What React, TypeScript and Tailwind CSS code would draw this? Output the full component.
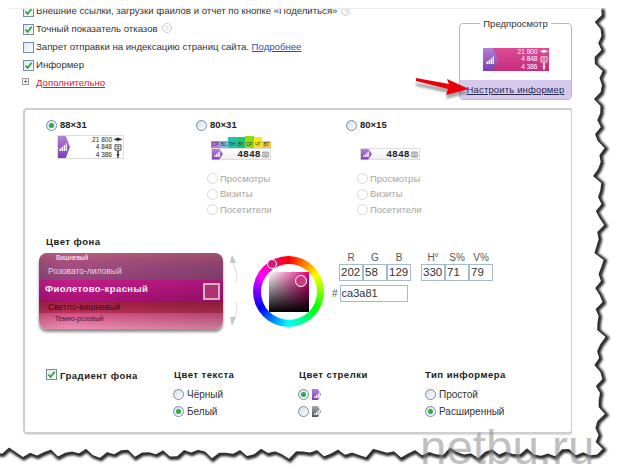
const font = "font-['Liberation_Sans',Arial,sans-serif]";

// torn paper edge: right side then bottom side, jagged but deterministic
const jag = (i: number) => Math.sin(i * 2.3) * 3.2 + Math.sin(i * 5.1 + 1) * 2.4 + Math.sin(i * 0.7) * 1.2;
const tornPoints = (() => {
  const pts: string[] = [];
  for (let y = 8, i = 0; y < 452; y += 7, i++) pts.push(`${599 + jag(i)},${y}`);
  for (let x = 597, i = 3; x > -8; x -= 7, i++) pts.push(`${x},${453 + jag(i) * 0.9}`);
  return pts;
})();
const edgeLine = tornPoints.join(" ");
const outside = `${edgeLine} -10,474 620,474 620,8`;

function Check({ on = true }: { on?: boolean }) {
  return (
    <span className="w-[11px] h-[11px] shrink-0 border border-[#6f8fb0] bg-linear-to-br from-[#dfe6ec] to-white flex items-center justify-center">
      {on && (
        <svg width="9" height="9" viewBox="0 0 9 9">
          <path d="M1.5 4.5 L3.6 7 L7.6 1.8" fill="none" stroke="#22a52b" strokeWidth="1.7" />
        </svg>
      )}
    </span>
  );
}

function Radio({ on = false, off = false }: { on?: boolean; off?: boolean }) {
  return (
    <span
      className={
        off
          ? "w-[11px] h-[11px] shrink-0 rounded-full border border-[#d8d8d8] bg-white"
          : "w-[11px] h-[11px] shrink-0 rounded-full border border-[#6f8fa8] bg-linear-to-br from-[#d5dde5] to-white flex items-center justify-center"
      }
    >
      {on && <span className="w-[5px] h-[5px] rounded-full bg-[#2faa45]" />}
    </span>
  );
}

function Option({ label, on, off }: { label: string; on?: boolean; off?: boolean }) {
  return (
    <div className={off ? "flex items-center gap-[2px] h-[15.5px] text-[#a5a5a5]" : "flex items-center gap-[3px] h-[17px] text-[#333]"}>
      <Radio on={on} off={off} />
      <span>{label}</span>
    </div>
  );
}

function Bars({ className }: { className: string }) {
  return (
    <svg viewBox="0 0 10 10" className={className}>
      <rect x="0.5" y="7" width="2" height="3" fill="#fff" />
      <rect x="3.2" y="5" width="2" height="5" fill="#fff" />
      <rect x="5.9" y="2.5" width="2" height="7.5" fill="#fff" />
      <rect x="8.4" y="0.5" width="1.6" height="9.5" fill="#fff" opacity="0.8" />
    </svg>
  );
}

function Stat({ value, kind }: { value: string; kind: "eye" | "box" | "man" }) {
  return (
    <span className="flex items-center justify-end gap-[2px] h-[7.4px]">
      {value}
      <svg width="8" height="7" viewBox="0 0 8 7" className="shrink-0">
        {kind === "eye" && <path d="M0 3.5 L4 1.8 L8 3.5 L4 4.6Z M3 3.5 L4 6" fill="currentColor" stroke="currentColor" strokeWidth="0.4" />}
        {kind === "box" && <path d="M1 .8 H7 V6.2 H1Z M2.5 2.6 H5.5 M2.5 4.4 H5.5" fill="none" stroke="currentColor" strokeWidth="0.8" />}
        {kind === "man" && <path d="M4 0 A1 1 0 1 1 4 2 A1 1 0 1 1 4 0Z M2.8 2.4 H5.2 V4.4 H4.6 V7 H3.4 V4.4 H2.8Z" fill="currentColor" />}
      </svg>
    </span>
  );
}

function Stats({ tone }: { tone: string }) {
  return (
    <div className={`flex-1 flex flex-col pr-[1px] text-[6.5px] leading-[7.4px] ${tone}`}>
      <Stat value="21 800" kind="eye" />
      <Stat value="4 848" kind="box" />
      <Stat value="4 386" kind="man" />
    </div>
  );
}

function Badge({ w, h, grey }: { w: string; h: string; grey?: boolean }) {
  return (
    <span
      className={`${w} ${h} shrink-0 flex items-center pl-[2px] [clip-path:polygon(0_0,65%_0,100%_50%,65%_100%,0_100%)] ${
        grey ? "bg-linear-to-b from-[#aaa] to-[#555]" : "bg-linear-to-b from-[#b67fd6] to-[#7d3fb0]"
      }`}
    >
      <Bars className="w-[6px] h-[6px]" />
    </span>
  );
}

function BigInformer() {
  return (
    <div className="w-[67px] h-[24px] border border-[#ddd] bg-white flex">
      <span className="w-[12px] shrink-0 flex items-center pl-[1px] [clip-path:polygon(0_0,65%_0,100%_50%,65%_100%,0_100%)] bg-linear-to-b from-[#b67fd6] to-[#7d3fb0]">
        <Bars className="w-[8px] h-[8px]" />
      </span>
      <Stats tone="text-[#222]" />
    </div>
  );
}

function PinkInformer() {
  return (
    <div className="w-[66px] h-[23px] bg-linear-to-b from-[#dc4a94] to-[#c62c7c] flex">
      <span className="w-[16px] shrink-0 flex items-center pl-[3px] [clip-path:polygon(0_0,65%_0,100%_50%,65%_100%,0_100%)] bg-linear-to-b from-[#b67fd6] to-[#7d3fb0]">
        <Bars className="w-[8px] h-[8px]" />
      </span>
      <Stats tone="text-white" />
    </div>
  );
}

function SmallInformer() {
  return (
    <div className="w-[60px] h-[12px] border border-[#ddd] bg-linear-to-b from-white to-[#eee] flex items-center justify-between pr-[1px]">
      <Badge w="w-[11px]" h="h-[11px]" />
      <span className="flex items-center gap-[1px] text-[9.5px] leading-none font-bold text-[#222] tracking-[0.6px]">
        4848
        <svg width="7" height="7" viewBox="0 0 8 7">
          <path d="M1 .8 H7 V6.2 H1Z M2.5 2.6 H5.5 M2.5 4.4 H5.5" fill="none" stroke="#666" strokeWidth="0.8" />
        </svg>
      </span>
    </div>
  );
}

const days = [
  { d: "СР", c: "bg-[#c07ad8]", h: "h-[7px]" },
  { d: "ВС", c: "bg-[#86b6e6]", h: "h-[7px]" },
  { d: "ПН", c: "bg-[#1fc0b0]", h: "h-[11px]" },
  { d: "ВТ", c: "bg-[#22c46a]", h: "h-[11px]" },
  { d: "СР", c: "bg-[#8ed81e]", h: "h-[12px]" },
  { d: "ЧТ", c: "bg-[#f2e81a]", h: "h-[11px]" },
  { d: "ВТ", c: "bg-[#f6c444]", h: "h-[7px]" },
];

function DisabledOptions() {
  return (
    <div className="ml-[11px] mt-[11px] text-[9.5px]">
      <Option off label="Просмотры" />
      <Option off label="Визиты" />
      <Option off label="Посетители" />
    </div>
  );
}

function Drum() {
  return (
    <div className="relative w-[184px] -ml-[7px] h-[76px] rounded-[8px] overflow-hidden shadow-[0_3px_3px_rgba(0,0,0,0.45)] flex flex-col text-white">
      <div className="h-[10px] pl-[17px] text-[6.5px] leading-[10px] bg-linear-to-b from-[#b9607f] to-[#a84d7b]">Вишневый</div>
      <div className="h-[17px] pl-[9px] text-[8.5px] leading-[16px] text-[#f1dbe6] bg-linear-to-b from-[#a54f84] to-[#93467c]">Розовато-лиловый</div>
      <div className="h-[22px] pl-[6px] pr-[3px] flex items-center justify-between font-bold text-[9.5px] tracking-[0.4px] bg-linear-to-b from-[#c71c8a] to-[#ab1177]">
        <span className="-mt-[3px]">Фиолетово-красный</span>
        <span className="w-[17px] h-[17px] border-2 border-[#f3cfe0] bg-[#ca3a81]" />
      </div>
      <div className="h-[11px] pl-[9px] text-[8.5px] leading-[11px] text-[#3a0a1c] bg-linear-to-b from-[#a51f45] to-[#b93158]">Светло-вишневый</div>
      <div className="flex-1 pl-[16px] text-[6.8px] leading-[12px] text-[#54152f] bg-linear-to-b from-[#d04d82] to-[#f08fb4]">Темно-розовый</div>
      <div className="absolute inset-0 bg-linear-to-r from-black/10 via-transparent via-15% to-black/15" />
    </div>
  );
}

function ColorWheel() {
  return (
    <div className="relative w-[71px] h-[71px] rounded-full bg-[conic-gradient(#f00,#ff0,#0f0,#0ff,#00f,#f0f,#f00)] flex items-center justify-center">
      <div className="w-[56px] h-[56px] rounded-full bg-white flex items-center justify-center">
        <div className="relative w-[40px] h-[40px] bg-[#e6007e]">
          <div className="absolute inset-0 bg-linear-to-r from-white to-transparent" />
          <div className="absolute inset-0 bg-linear-to-b from-transparent to-black" />
          <span className="absolute right-[2px] top-[3px] w-[12px] h-[12px] rounded-full border border-white bg-[#ca3a81]" />
        </div>
      </div>
      <span className="absolute left-[14px] top-[3px] w-[10px] h-[10px] rounded-full border border-white bg-[#d41a7c]" />
    </div>
  );
}

function Field({ label, value }: { label: string; value: string }) {
  return (
    <div className="w-[24px] flex flex-col items-center">
      <span className="text-[10px] leading-[12px] text-[#555]">{label}</span>
      <span className="w-full h-[17px] border border-[#a5bacd] pl-[1px] text-[11.5px] leading-[15px] text-[#333] bg-white">{value}</span>
    </div>
  );
}

function RgbFields() {
  return (
    <div className="flex flex-col ml-[15px] -mt-px">
      <div className="flex gap-[10px]">
        <div className="flex">
          <Field label="R" value="202" />
          <Field label="G" value="58" />
          <Field label="B" value="129" />
        </div>
        <div className="flex">
          <Field label="H°" value="330" />
          <Field label="S%" value="71" />
          <Field label="V%" value="79" />
        </div>
      </div>
      <div className="flex items-center mt-[4px] -ml-[7px] gap-[2px]">
        <span className="text-[10px] text-[#555]">#</span>
        <span className="w-[68px] h-[17px] border border-[#a5bacd] pl-[1px] text-[11px] leading-[15px] text-[#333]">ca3a81</span>
      </div>
    </div>
  );
}

function Heading({ children }: { children: string }) {
  return <div className="font-bold text-[9.5px] leading-[13px] tracking-[0.5px] text-[#222]">{children}</div>;
}

export default function App() {
  return (
    <div className={`${font} relative w-[620px] h-[474px] overflow-hidden bg-white text-[10px] text-[#333]`}>
      <div className="h-[474px] pt-[9px] pl-[22px] pr-[48px] overflow-hidden">
        <div className="h-[465px] overflow-hidden">
          <div className="flex justify-between -mt-[7px]">
            <div className="ml-[1px] text-[9.6px]">
              <div className="flex items-center gap-[2px] h-[18px]"><Check />Внешние ссылки, загрузки файлов и отчет по кнопке «Поделиться» <span className="w-[9px] h-[9px] ml-[2px] rounded-full border border-[#ccc] text-[7px] leading-[8px] text-center text-[#bbb]">?</span></div>
              <div className="flex items-center gap-[2px] h-[18px]"><Check />Точный показатель отказов <span className="w-[10px] h-[10px] ml-[2px] -mt-[3px] rounded-full border border-[#ccc] text-[7px] leading-[9px] text-center text-[#bbb]">?</span></div>
              <div className="flex items-center gap-[2px] h-[18px]"><Check on={false} /><span>Запрет отправки на индексацию страниц сайта. <a className="text-[#2a50b4] underline">Подробнее</a></span></div>
              <div className="flex items-center gap-[2px] h-[18px]"><Check />Информер</div>
              <div className="flex items-center h-[18px] -ml-[1px]">
                <span className="w-[7px] h-[7px] border border-[#999] text-[7px] leading-[5px] text-center text-[#111] -mt-[3px]">+</span>
                <a className="ml-[7px] text-[#e0132c] underline">Дополнительно</a>
              </div>
            </div>
            <div className="relative w-[113px] h-[77px] mt-[21px] border border-[#b8b8b8] rounded-[4px] flex flex-col items-center overflow-visible">
              <span className="absolute -top-[7px] bg-white px-[3px] text-[9.5px] leading-[13px] text-[#333]">Предпросмотр</span>
              <div className="flex-1 flex items-center justify-center pt-[15px]"><PinkInformer /></div>
              <div className="w-full h-[19px] bg-[#d7c9ee] rounded-b-[4px] text-center text-[9.5px] leading-[19px] tracking-[0.15px] text-[#2d2d4a]"><span className="underline">Настроить информер</span></div>
            </div>
          </div>

          <div className="mt-[8px] ml-[1px] w-[550px] h-[326px] border-2 border-[#cfcfcf] rounded-[4px] pl-[21px] pt-[8px] shadow-[1px_1px_1px_rgba(0,0,0,0.12)]">
            <div className="grid grid-cols-[150px_150px_150px] h-[114px]">
              <div>
                <div className="flex items-center gap-[3px] h-[14px] font-bold text-[9.5px] text-[#222]"><Radio on />88×31</div>
                <div className="ml-[11px] mt-[3px]"><BigInformer /></div>
              </div>
              <div>
                <div className="flex items-center gap-[3px] h-[14px] font-bold text-[9.5px] text-[#222]"><Radio />80×31</div>
                <div className="ml-[15px] mt-[4px] w-[60px]">
                  <div className="flex items-end h-[12px]">
                    {days.map((x, i) => (
                      <span key={i} className={`${x.c} ${x.h} w-[8.5px] text-[4.5px] leading-[7px] text-center text-[#333] flex items-end justify-center`}>{x.d}</span>
                    ))}
                  </div>
                  <SmallInformer />
                </div>
                <DisabledOptions />
              </div>
              <div>
                <div className="flex items-center gap-[3px] h-[14px] font-bold text-[9.5px] text-[#222]"><Radio />80×15</div>
                <div className="ml-[14px] mt-[16px]"><SmallInformer /></div>
                <DisabledOptions />
              </div>
            </div>

            <div className="h-[13px] mt-[3px]"><Heading>Цвет фона</Heading></div>
            <div className="flex mt-[5px] h-[86px]">
              <Drum />
              <svg width="14" height="72" viewBox="0 0 14 72" className="ml-[7px] mt-[2px] shrink-0">
                <path d="M2 6 Q9 20 6 28 M6 46 Q9 54 3 66" fill="none" stroke="#dedede" strokeWidth="1" />
                <path d="M0 8 L2 0 L6 8Z M0 62 L6 62 L2 71Z" fill="#c4c4c4" />
              </svg>
              <div className="ml-[9px] mt-[3px]"><ColorWheel /></div>
              <RgbFields />
            </div>

            <div className="grid grid-cols-[128px_125px_126px_100px] mt-[29px]">
              <div className="flex items-start gap-[3px] pt-[1px]"><Check /><Heading>Градиент фона</Heading></div>
              <div>
                <Heading>Цвет текста</Heading>
                <div className="mt-[5px] ml-[-1px]">
                  <Option label="Чёрный" />
                  <Option on label="Белый" />
                </div>
              </div>
              <div>
                <Heading>Цвет стрелки</Heading>
                <div className="mt-[5px] ml-[-1px] flex flex-col">
                  <div className="flex items-center gap-[3px] h-[17px]"><Radio on /><Badge w="w-[9px]" h="h-[11px]" /></div>
                  <div className="flex items-center gap-[3px] h-[17px]"><Radio /><Badge grey w="w-[9px]" h="h-[11px]" /></div>
                </div>
              </div>
              <div>
                <Heading>Тип информера</Heading>
                <div className="mt-[5px]">
                  <Option label="Простой" />
                  <Option on label="Расширенный" />
                </div>
              </div>
            </div>
          </div>
        </div>
      </div>

      {/* top sheet edge, torn edge and arrow lie over the page */}
      <div className="absolute left-[9px] top-[8px] w-[590px] h-px bg-[#ececec]" />
      <svg width="620" height="474" viewBox="0 0 620 474" className="absolute left-0 top-0 pointer-events-none">
        <defs>
          <clipPath id="outside"><polygon points={outside} /></clipPath>
          <filter id="soft"><feGaussianBlur stdDeviation="1.3" /></filter>
          <filter id="arrowShade"><feGaussianBlur stdDeviation="1" /></filter>
        </defs>
        <polygon points={outside} fill="#fff" />
        <g clipPath="url(#outside)">
          <polyline points={edgeLine} fill="none" stroke="#2a2a2a" strokeWidth="5" filter="url(#soft)" transform="translate(1,1)" />
        </g>
        <path d="M416 81 L449 86 L447 81 L469 91 L446 97 L448 91 L416 84Z" fill="#555" opacity="0.5" filter="url(#arrowShade)" transform="translate(0,2)" />
        <path d="M416 78 L449 84 L447 79 L469 89 L446 95 L448 89 L416 81Z" fill="#e8000b" />
      </svg>
      <div className="absolute left-[420px] top-[420px] text-[47.5px] leading-[56px] text-[#8a8a8a]/55">netbu.ru</div>
    </div>
  );
}
